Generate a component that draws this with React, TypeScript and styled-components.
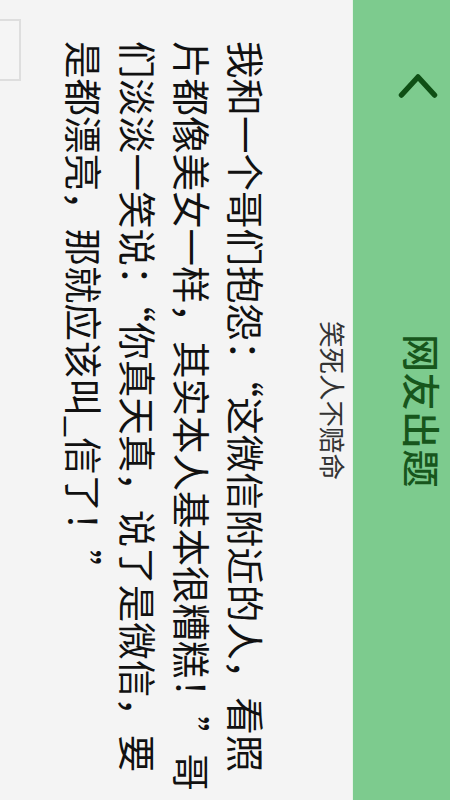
import React from 'react';
import styled, { createGlobalStyle } from 'styled-components';

const GlobalStyle = createGlobalStyle`
  html, body {
    margin: 0;
    padding: 0;
    background: #f4f4f4;
  }
`;

// The page is laid out sideways: block flow runs right to left,
// lines run top to bottom, glyphs are turned a quarter clockwise.
const Screen = styled.div`
  writing-mode: vertical-rl;
  text-orientation: sideways;
  width: 450px;
  height: 800px;
  overflow: hidden;
  background: #f4f4f4;
  font-family: "Noto Sans CJK SC", "Noto Sans", sans-serif;
`;

const Header = styled.header`
  block-size: 97px;
  display: grid;
  grid-template-columns: 1fr auto 1fr;
  align-items: start;
  background: #7dcb8e;
  border-block-end: 1px solid #e6f3e8;
`;

const BackButton = styled.button`
  justify-self: start;
  margin-inline-start: 73px;
  margin-block-start: 12px;
  padding: 0;
  border: none;
  background: none;
  display: flex;
  color: #0f4f15;
`;

const Title = styled.h1`
  margin: 22px 0 0;
  font-size: 38px;
  line-height: 54px;
  font-weight: 500;
  color: #17561c;
  letter-spacing: 0.5px;
`;

const Subtitle = styled.div`
  margin-block-start: 4px;
  font-size: 26.5px;
  line-height: 30px;
  text-align: center;
  color: #333;
`;

const Story = styled.div`
  margin-block-start: 44px;
  padding-inline-start: 41px;
  font-size: 37.5px;
  line-height: 54px;
  color: #111;
`;

const Line = styled.div`
  white-space: nowrap;
`;

const AnswerBox = styled.div`
  flex: none;
  margin-block-start: 37px;
  margin-inline-start: 19px;
  inline-size: 58px;
  block-size: 40px;
  border: 2px solid #dedede;
  background: #f5f5f5;
`;

const lines = [
  '我和一个哥们抱怨：“这微信附近的人，看照',
  '片都像美女一样，其实本人基本很糟糕！”哥',
  '们淡淡一笑说：“你真天真，说了是微信，要',
  '是都漂亮，那就应该叫_信了！”',
];

const ChevronUp: React.FC = () => (
  <svg width="40" height="26" viewBox="0 0 40 26" fill="none">
    <path
      d="M3.5 22 L20 4 L36.5 22"
      stroke="currentColor"
      strokeWidth="5.5"
      strokeLinecap="round"
      strokeLinejoin="round"
    />
  </svg>
);

const App: React.FC = () => {
  return (
    <>
      <GlobalStyle />
      <Screen>
        <Header>
          <BackButton aria-label="返回">
            <ChevronUp />
          </BackButton>
          <Title>网友出题</Title>
          <span />
        </Header>
        <Subtitle>笑死人不赔命</Subtitle>
        <Story>
          {lines.map((text, i) => (
            <Line key={i}>{text}</Line>
          ))}
        </Story>
        <AnswerBox />
      </Screen>
    </>
  );
};

export default App;
